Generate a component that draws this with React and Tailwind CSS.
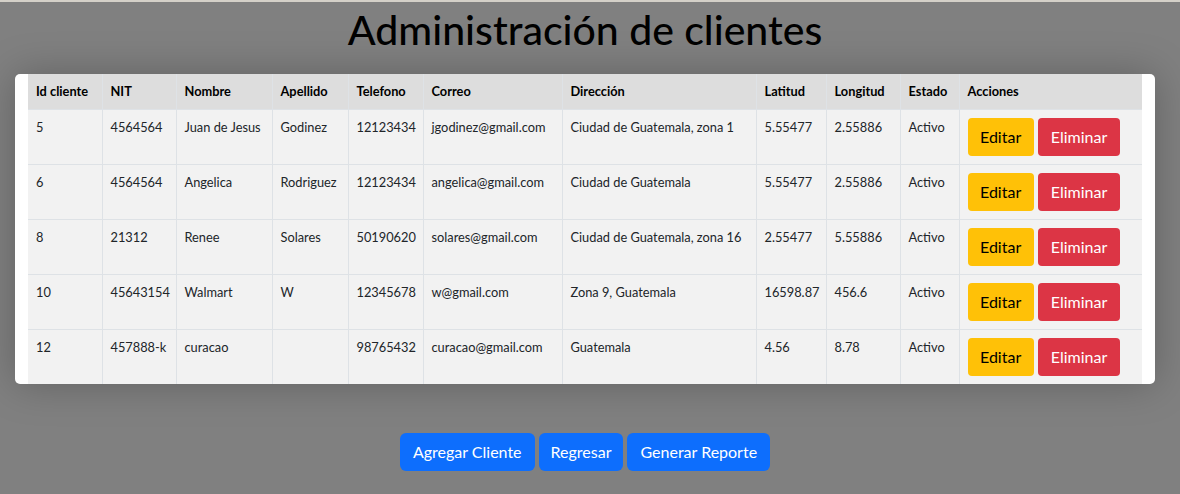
import React from "react";

const clientes = [
  { id: 5, nit: "4564564", nombre: "Juan de Jesus", apellido: "Godinez", telefono: "12123434", correo: "jgodinez@gmail.com", direccion: "Ciudad de Guatemala, zona 1", latitud: "5.55477", longitud: "2.55886", estado: "Activo" },
  { id: 6, nit: "4564564", nombre: "Angelica", apellido: "Rodriguez", telefono: "12123434", correo: "angelica@gmail.com", direccion: "Ciudad de Guatemala", latitud: "5.55477", longitud: "2.55886", estado: "Activo" },
  { id: 8, nit: "21312", nombre: "Renee", apellido: "Solares", telefono: "50190620", correo: "solares@gmail.com", direccion: "Ciudad de Guatemala, zona 16", latitud: "2.55477", longitud: "5.55886", estado: "Activo" },
  { id: 10, nit: "45643154", nombre: "Walmart", apellido: "W", telefono: "12345678", correo: "w@gmail.com", direccion: "Zona 9, Guatemala", latitud: "16598.87", longitud: "456.6", estado: "Activo" },
  { id: 12, nit: "457888-k", nombre: "curacao", apellido: "", telefono: "98765432", correo: "curacao@gmail.com", direccion: "Guatemala", latitud: "4.56", longitud: "8.78", estado: "Activo" },
];

const columnas = [
  { label: "Id cliente", w: "w-[74px]" },
  { label: "NIT", w: "w-[74px]" },
  { label: "Nombre", w: "w-[96px]" },
  { label: "Apellido", w: "w-[76px]" },
  { label: "Telefono", w: "w-[75px]" },
  { label: "Correo", w: "w-[139px]" },
  { label: "Dirección", w: "w-[194px]" },
  { label: "Latitud", w: "w-[70px]" },
  { label: "Longitud", w: "w-[74px]" },
  { label: "Estado", w: "w-[59px]" },
  { label: "Acciones", w: "w-[183px]" },
];

const cell = "px-2 py-2 align-top border-r border-[#dee2e6] last:border-r-0";

export default function App() {
  return (
    <div className="min-h-[494px] bg-[#808080] border-t-2 border-[#d4d0c8] font-['Lato',sans-serif] text-[#212529]">
      <div className="w-[1170px] flex flex-col items-center">
        <h1 className="mt-[4px] text-[41px] leading-[48px] font-medium text-black">
          Administración de clientes
        </h1>
        <div className="mt-[20px] w-[1140px] bg-white rounded-[5px] px-[13px] shadow-[0_0_40px_rgba(0,0,0,0.25)] overflow-hidden">
          <table className="table-fixed w-[1114px] border-collapse text-[12.8px] leading-[19.2px]">
            <thead>
              <tr className="bg-[#dddddd] border-b border-[#dee2e6]">
                {columnas.map((c) => (
                  <th key={c.label} className={`${c.w} ${cell} text-left font-bold text-black`}>
                    {c.label}
                  </th>
                ))}
              </tr>
            </thead>
            <tbody>
              {clientes.map((c, i) => (
                <tr key={c.id} className={`bg-[#f2f2f2] ${i < clientes.length - 1 ? "border-b border-[#dee2e6]" : ""}`}>
                  <td className={cell}>{c.id}</td>
                  <td className={cell}>{c.nit}</td>
                  <td className={cell}>{c.nombre}</td>
                  <td className={cell}>{c.apellido}</td>
                  <td className={cell}>{c.telefono}</td>
                  <td className={cell}>{c.correo}</td>
                  <td className={cell}>{c.direccion}</td>
                  <td className={cell}>{c.latitud}</td>
                  <td className={cell}>{c.longitud}</td>
                  <td className={cell}>{c.estado}</td>
                  <td className={cell}>
                    <div className="flex gap-[4px]">
                      <button className="h-[38px] px-[12.5px] rounded-[4px] bg-[#ffc107] text-black text-[16px] leading-6">
                        Editar
                      </button>
                      <button className="h-[38px] px-[13px] rounded-[4px] bg-[#dc3545] text-white text-[16px] leading-6">
                        Eliminar
                      </button>
                    </div>
                  </td>
                </tr>
              ))}
            </tbody>
          </table>
        </div>
        <div className="mt-[49px] flex gap-[4px]">
          <button className="h-[38px] px-[13px] rounded-[6px] bg-[#0d6efd] text-white text-[16px] leading-6">
            Agregar Cliente
          </button>
          <button className="h-[38px] px-[12px] rounded-[6px] bg-[#0d6efd] text-white text-[16px] leading-6">
            Regresar
          </button>
          <button className="h-[38px] px-[13px] rounded-[6px] bg-[#0d6efd] text-white text-[16px] leading-6">
            Generar Reporte
          </button>
        </div>
      </div>
    </div>
  );
}
